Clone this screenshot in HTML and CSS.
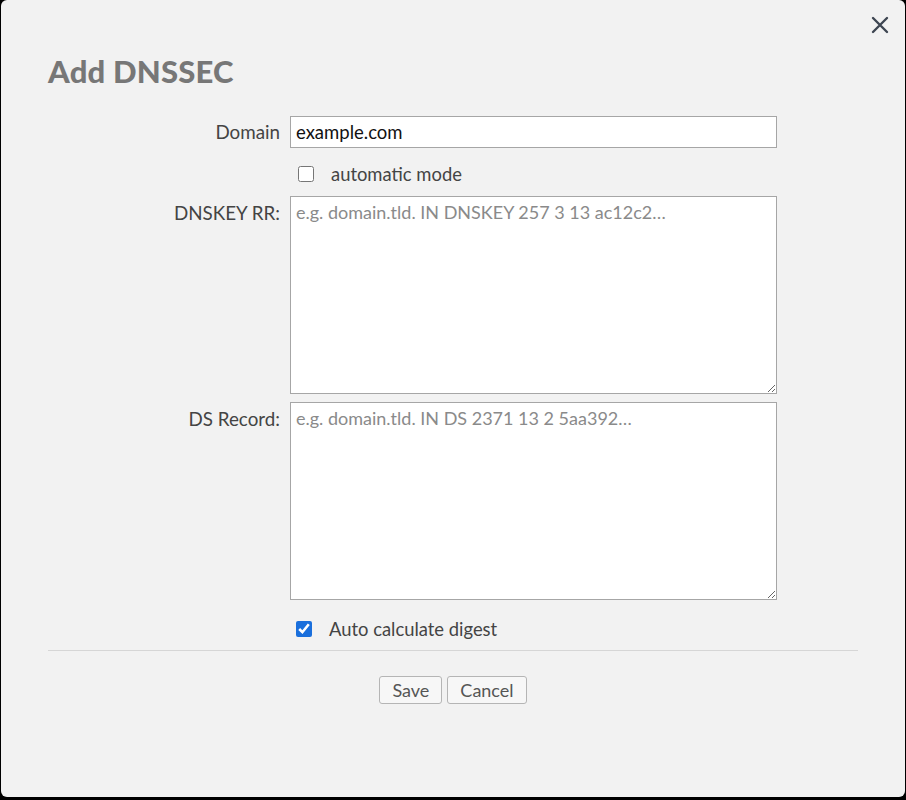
FILE: index.html
```html
<!DOCTYPE html>
<html>
<head>
<meta charset="utf-8">
<link rel="stylesheet" href="styles.css">
</head>
<body>
<div class="dialog">
  <button class="close" aria-label="Close">
    <svg width="18" height="18" viewBox="0 0 18 18"><path d="M2 2 L16 16 M16 2 L2 16" stroke="#3e4652" stroke-width="2.4" stroke-linecap="round" fill="none"/></svg>
  </button>
  <h1 class="title">Add DNSSEC</h1>
  <form class="form">
    <label class="lbl lbl-domain">Domain</label>
    <input class="field text" type="text" value="example.com">

    <div class="empty"></div>
    <label class="check check-auto"><input type="checkbox"><span>automatic mode</span></label>

    <label class="lbl lbl-area">DNSKEY RR:</label>
    <textarea class="field area" placeholder="e.g. domain.tld. IN DNSKEY 257 3 13 ac12c2…"></textarea>

    <label class="lbl lbl-area lbl-ds">DS Record:</label>
    <textarea class="field area area-ds" placeholder="e.g. domain.tld. IN DS 2371 13 2 5aa392…"></textarea>

    <div class="empty"></div>
    <label class="check check-digest"><input type="checkbox" checked><span>Auto calculate digest</span></label>
  </form>
  <hr class="sep">
  <div class="actions">
    <button class="btn" type="button">Save</button>
    <button class="btn" type="button">Cancel</button>
  </div>
</div>
</body>
</html>
```
FILE: styles.css
```css
html, body {
  margin: 0;
  padding: 0;
  background: #000;
  height: 800px;
  overflow: hidden;
}
.dialog {
  position: relative;
  margin-left: 1px;
  width: 904px;
  height: 797px;
  background: #f2f2f2;
  border-radius: 6px;
  box-sizing: border-box;
  padding: 1px 47px 0 47px;
  font-family: Lato, "Noto Sans", sans-serif;
  color: #444;
}
.close {
  position: absolute;
  top: 16px;
  right: 16px;
  width: 18px;
  height: 18px;
  padding: 0;
  border: 0;
  background: none;
}
.close svg { display: block; }
.title {
  margin: 50px 0 0 0;
  font-family: Lato, sans-serif;
  font-weight: 900;
  font-size: 31px;
  line-height: 40px;
  color: #777;
  letter-spacing: 0.2px;
}
.form {
  display: grid;
  grid-template-columns: 232px 487px;
  column-gap: 10px;
  margin-top: 25px;
}
.lbl {
  text-align: right;
  font-size: 18.8px;
  color: #444;
}
.lbl-domain { line-height: 32px; }
.lbl-area { padding-top: 6px; line-height: 22px; }
.lbl-ds { margin-top: 8px; }
.field {
  box-sizing: border-box;
  width: 487px;
  border: 1px solid #a6a6a6;
  background: #fff;
  font-family: Lato, sans-serif;
  font-size: 18px;
  color: #111;
  margin: 0;
}
.text {
  height: 32px;
  padding: 0 5px;
  font-size: 18.5px;
}
.area {
  height: 198px;
  padding: 4px 5px;
  resize: vertical;
  line-height: 22px;
}
.area::placeholder { color: #8a8a8a; }
.area-ds { margin-top: 8px; }
.check {
  display: flex;
  align-items: center;
  font-size: 18.4px;
  color: #444;
}
.check input {
  margin: 0;
  width: 16px;
  height: 16px;
  accent-color: #1a6fdc;
}
.check-auto {
  height: 48px;
  padding-left: 8px;
  padding-top: 4px;
  box-sizing: border-box;
}
.check-auto span { margin-left: 17px; }
.check-digest {
  height: 40px;
  padding-left: 6px;
  margin-top: 9px;
}
.check-digest span { margin-left: 17px; }
.sep {
  border: 0;
  border-top: 1px solid #d6d6d6;
  margin: 0;
  margin-top: 1px;
  height: 0;
}
.actions {
  display: flex;
  justify-content: center;
  gap: 5px;
  margin-top: 25px;
  padding-left: 0;
}
.btn {
  font-family: Lato, sans-serif;
  font-size: 18px;
  color: #555;
  background: #f7f7f7;
  border: 1px solid #b5b5b5;
  border-radius: 3px;
  height: 28px;
  padding: 0 12px;
  line-height: 26px;
}
```
